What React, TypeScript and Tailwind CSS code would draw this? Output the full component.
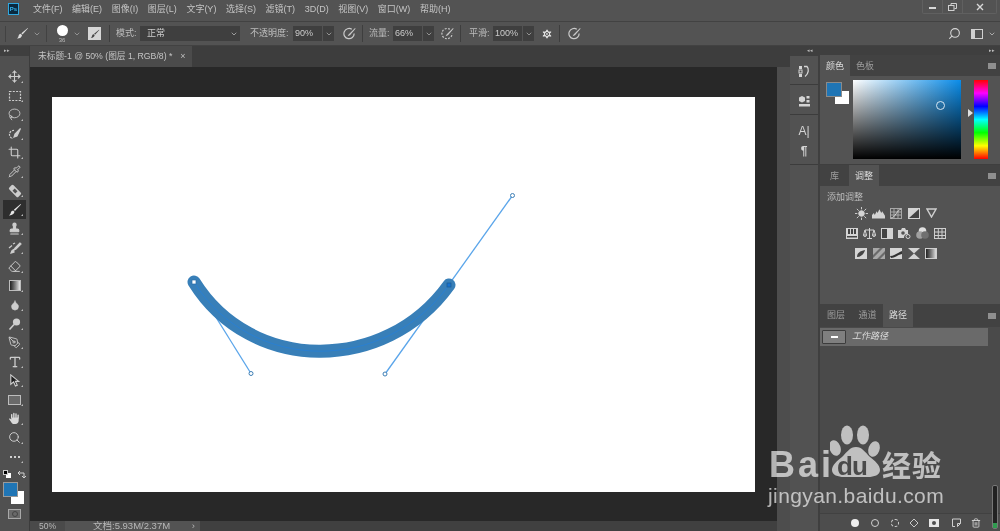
import React from "react";
import {
  ChevronDown,
  Crop,
  Droplet,
  Eraser,
  Lasso,
  Move,
  PenTool,
  Pipette,
  Search,
  Settings,
  Stamp,
  Trash2,
  Type,
} from "lucide-react";

const menus = ["文件(F)", "编辑(E)", "图像(I)", "图层(L)", "文字(Y)", "选择(S)", "滤镜(T)", "3D(D)", "视图(V)", "窗口(W)", "帮助(H)"];

const BrushIcon = ({ size = 14 }: { size?: number }) => (
  <svg width={size} height={size} viewBox="0 0 14 14" fill="currentColor">
    <path d="M12.6 1 13 1.4 7 8 5.8 6.8Z" />
    <path d="M5.2 7.4 6.5 8.8C6.2 11 4 12.6 1 12.4 2.6 11.4 2.6 10.2 3 9 3.4 8 4.2 7.5 5.2 7.4Z" />
  </svg>
);

const Svg = ({ children, size = 14 }: { children: React.ReactNode; size?: number }) => (
  <svg width={size} height={size} viewBox="0 0 14 14" fill="none" stroke="currentColor" strokeWidth="1.2">
    {children}
  </svg>
);

const tools: React.ReactNode[] = [
  <Move size={13} strokeWidth={2} />,
  <Svg><rect x="1.5" y="2.5" width="11" height="9" strokeDasharray="2 1.3" /></Svg>,
  <Lasso size={13} strokeWidth={1.6} />,
  <Svg><path d="M6 3.5A4 4 0 1 0 5 11.5" strokeDasharray="2 1" /><path d="M12.5 1.5 7 7 6 10 9 9Z" fill="currentColor" /></Svg>,
  <Crop size={13} strokeWidth={2} />,
  <Pipette size={13} strokeWidth={1.8} />,
  <Svg><g transform="rotate(45 7 7)"><rect x="0.5" y="4" width="13" height="6" rx="1.5" fill="currentColor" stroke="none" /><rect x="5" y="5.5" width="4" height="3" fill="#535353" stroke="none" /></g></Svg>,
  <BrushIcon />,
  <Stamp size={13} strokeWidth={2} fill="currentColor" />,
  <Svg><path d="M12 2 7 7 6 9 8 8 13 3Z" fill="currentColor" /><path d="M5.5 8.5C4 9 3.5 10 3 12L6 11Z" fill="currentColor" /><path d="M1 7 4 4.5M7 2 5 3" /></Svg>,
  <Eraser size={13} strokeWidth={1.8} />,
  <div className="w-[12px] h-[11px] border border-[#bdbdbd] bg-linear-to-r from-[#222222] to-[#e8e8e8]" />,
  <Droplet size={12} fill="currentColor" strokeWidth={1} />,
  <Svg><circle cx="8.5" cy="5" r="3.6" fill="currentColor" stroke="none" /><path d="M6 7.5 1.5 12.5" strokeWidth="1.6" /></Svg>,
  <PenTool size={13} strokeWidth={1.6} />,
  <Type size={14} strokeWidth={2.2} />,
  <svg width="13" height="13" viewBox="0 0 14 14" fill="#1f1f1f" stroke="#cfcfcf" strokeWidth="1.2"><path d="M3 1 3 11 6 8.5 8 13 10 12 8 8 11.5 8Z" /></svg>,
  <div className="w-[13px] h-[10px] border border-[#bdbdbd] bg-[#6a6a6a]" />,
  <svg width="13" height="13" viewBox="0 0 14 14" fill="#d8d8d8" stroke="#d8d8d8" strokeLinecap="round">
    <path d="M4 6V2.800M6.300 6V1.500M8.600 6V2M10.900 6.500V3.500" strokeWidth="1.500" />
    <path d="M3.500 6H11.500V9.500C11.500 11.500 10 13 8 13H6.500C5 13 4 12 3.200 10.500L1 7.500C1.500 6.800 2.500 7 3.500 8Z" stroke="none" />
  </svg>,
  <Search size={13} strokeWidth={1.8} />,
];

const Tool = ({ active, children, corner = true }: { active?: boolean; children: React.ReactNode; corner?: boolean }) => (
  <div className={`relative h-[19px] mx-[3px] flex items-center justify-center text-[#cdcdcd] ${active ? "bg-[#2e2e2e] text-[#e6e6e6]" : ""}`}>
    {children}
    {corner && <span className="absolute right-[3px] bottom-[3px] w-0 h-0 border-l-[2px] border-l-transparent border-b-[2px] border-b-[#bdbdbd]" />}
  </div>
);

const Toolbar = () => (
  <div className="w-[30px] h-full flex flex-col border-r border-[#3c3c3c] bg-[#505050]">
    <div className="h-[10px] bg-[#3f3f3f] text-[5px] leading-[9px] pl-[4px] text-[#bbbbbb]">▸▸</div>
    <div className="h-[11px]" />
    {tools.map((t, i) => (
      <Tool key={i} active={i === 7}>{t}</Tool>
    ))}
    <Tool>
      <span className="flex gap-[2px]">
        <i className="w-[2px] h-[2px] bg-[#d0d0d0]" />
        <i className="w-[2px] h-[2px] bg-[#d0d0d0]" />
        <i className="w-[2px] h-[2px] bg-[#d0d0d0]" />
      </span>
    </Tool>
    <div className="h-[10px] mt-[3px] flex items-center justify-between px-[3px]">
      <span className="relative w-[8px] h-[8px]">
        <i className="absolute right-0 bottom-0 w-[5px] h-[5px] bg-white" />
        <i className="absolute left-0 top-0 w-[5px] h-[5px] bg-black border-[0.5px] border-[#cccccc]" />
      </span>
      <svg width="9" height="9" viewBox="0 0 9 9" fill="none" stroke="#d0d0d0" strokeWidth="1">
        <path d="M1 3h6v5M1 3l2-2M1 3l2 2M7 8l-2-2M7 8l2-2" />
      </svg>
    </div>
    <div className="relative h-[24px] mt-[3px]">
      <div className="absolute left-[11px] top-[9px] w-[13px] h-[13px] bg-white" />
      <div className="absolute left-[3px] top-0 w-[15px] h-[15px] bg-[#1f75b5] border border-[#9a9a9a]" />
    </div>
    <div className="flex justify-center mt-[3px]">
      <div className="w-[13px] h-[10px] border border-[#a8a8a8] bg-[#6a6a6a] flex items-center justify-center">
        <i className="w-[6px] h-[6px] rounded-full border border-[#444444]" />
      </div>
    </div>
  </div>
);

const OptInput = ({ value }: { value: string }) => (
  <div className="flex h-[15px]">
    <span className="w-[29px] bg-[#3f3f3f] text-[9px] leading-[15px] pl-[2px] text-[#cccccc]">{value}</span>
    <span className="w-[11px] ml-[1px] bg-[#3f3f3f] flex items-center justify-center text-[#bcbcbc]">
      <ChevronDown size={8} />
    </span>
  </div>
);

const Divider = ({ ml }: { ml: string }) => <span className={`w-px h-[17px] bg-[#3e3e3e] ${ml}`} />;

const Airbrush = ({ ml, cross }: { ml: string; cross?: boolean }) => (
  <svg className={ml} width="13" height="13" viewBox="0 0 14 14" fill="none" stroke="#c9c9c9" strokeWidth="1.3">
    <path d="M9.5 2.5A5.5 5.5 0 1 0 12 7" strokeDasharray={cross ? "2 1.5" : undefined} />
    <path d="M13 1 6 8 5 10 7.5 9 13.5 2Z" fill="#c9c9c9" stroke="none" />
  </svg>
);

const OptionsBar = () => (
  <div className="h-[25px] border-y border-[#424242] bg-[#535353] flex items-center text-[9px] text-[#bdbdbd] shrink-0">
    <span className="ml-[5px] w-px h-[16px] bg-[#424242]" />
    <span className="ml-[10px] text-[#dddddd]"><BrushIcon size={13} /></span>
    <ChevronDown size={8} className="ml-[4px] text-[#b0b0b0]" />
    <span className="w-px h-[17px] bg-[#424242] ml-[5px]" />
    <div className="ml-[8px] w-[14px] flex flex-col items-center">
      <span className="w-[11px] h-[11px] mt-[1px] rounded-full bg-white" />
      <span className="text-[6px] leading-[7px] mt-[1px] text-[#bbbbbb]">36</span>
    </div>
    <ChevronDown size={8} className="ml-[4px] text-[#b0b0b0]" />
    <div className="ml-[7px] w-[13px] h-[13px] bg-[#d6d6d6] flex items-center justify-center text-[#444444]"><BrushIcon size={10} /></div>
    <Divider ml="ml-[8px]" />
    <span className="ml-[6px] w-[24px] whitespace-nowrap">模式:</span>
    <div className="w-[100px] h-[15px] bg-[#3f3f3f] flex items-center justify-between pl-[7px] pr-[2px] text-[#cccccc]">
      <span>正常</span>
      <ChevronDown size={8} />
    </div>
    <span className="ml-[10px] w-[43px] whitespace-nowrap">不透明度:</span>
    <OptInput value="90%" />
    <Airbrush ml="ml-[9px]" />
    <Divider ml="ml-[6px]" />
    <span className="ml-[6px] w-[24px] whitespace-nowrap">流量:</span>
    <OptInput value="66%" />
    <Airbrush ml="ml-[7px]" cross />
    <Divider ml="ml-[6px]" />
    <span className="ml-[8px] w-[24px] whitespace-nowrap">平滑:</span>
    <OptInput value="100%" />
    <Settings size={12} fill="#e0e0e0" strokeWidth={2} className="ml-[7px] text-[#535353]" />
    <Divider ml="ml-[6px]" />
    <Airbrush ml="ml-[8px]" />
    <div className="ml-auto flex items-center text-[#d6d6d6]">
      <Search size={13} strokeWidth={2} className="-scale-x-100" />
      <div className="ml-[10px] w-[12px] h-[10px] border border-[#d0d0d0] flex">
        <i className="w-[3px] bg-[#d0d0d0]" />
      </div>
      <ChevronDown size={8} className="ml-[5px] mr-[4px]" />
    </div>
  </div>
);

const TitleBar = () => (
  <div className="h-[21px] flex items-start shrink-0 bg-[#535353]">
    <div className="ml-[8px] mt-[3px] w-[11px] h-[12px] bg-[#0a2a3f] border border-[#2fa8e0] text-[6px] leading-[10px] text-center font-bold text-[#38b6f0]">Ps</div>
    <div className="ml-[14px] mt-[3px] flex gap-[9.6px] text-[9px] leading-[13px] text-[#c4c4c4] whitespace-nowrap">
      {menus.map((m) => (
        <span key={m}>{m}</span>
      ))}
    </div>
    <div className="ml-auto mr-[3px] w-[75px] h-[14px] border border-t-0 border-[#606060] rounded-b-[2px] flex items-center text-[#d0d0d0]">
      <div className="w-[20px] h-full border-r border-[#606060] flex items-center justify-center pt-[3px]"><i className="w-[7px] h-[1.5px] bg-[#d8d8d8]" /></div>
      <div className="w-[20px] h-full border-r border-[#606060] flex items-center justify-center">
        <svg width="9" height="8" viewBox="0 0 9 8" fill="none" stroke="#d0d0d0"><rect x="0.5" y="2.5" width="5.5" height="5" /><path d="M3 2V.5h5.5v5H6.5" /></svg>
      </div>
      <div className="flex-1 flex items-center justify-center">
        <svg width="8" height="8" viewBox="0 0 8 8" stroke="#d8d8d8" strokeWidth="1.4"><path d="M1 1 7 7M7 1 1 7" /></svg>
      </div>
    </div>
  </div>
);

const Handle = ({ x, y }: { x: number; y: number }) => (
  <circle cx={x} cy={y} r="2" fill="#ffffff" stroke="#3f7fb5" strokeWidth="1" />
);

const curve = "M194 282C251 373.5 385 374 449 285";

const Artboard = () => (
  <div className="w-[703px] h-[395px] bg-white">
    <svg width="703" height="395" viewBox="52 97 703 395" fill="none">
      <path d="M194 282 251 373.5" stroke="#5aa5ea" strokeWidth="1.3" />
      <path d="M385 374 512.5 195.5" stroke="#5aa5ea" strokeWidth="1.3" />
      <path d={curve} stroke="#387fb8" strokeWidth="13" strokeLinecap="round" />
      <path d={curve} stroke="#2a80d2" strokeWidth="1" />
      <rect x="192" y="280" width="4" height="4" fill="#ffffff" stroke="#2a6ea8" strokeWidth="0.7" />
      <rect x="447" y="283" width="4" height="4" fill="#1672d0" stroke="#1c5a90" strokeWidth="0.7" />
      <Handle x={251} y={373.5} />
      <Handle x={385} y={374} />
      <Handle x={512.5} y={195.5} />
    </svg>
  </div>
);

const Document = () => (
  <div className="w-[747px] h-full flex flex-col">
    <div className="h-[21px] bg-[#3d3d3d] flex shrink-0">
      <div className="w-[162px] bg-[#4b4b4b] flex items-center pl-[8px] text-[8.7px] text-[#c4c4c4] whitespace-nowrap">
        <span>未标题-1 @ 50% (图层 1, RGB/8) *</span>
        <span className="ml-[8px] text-[#bdbdbd] text-[9px] leading-none">×</span>
      </div>
    </div>
    <div className="flex-1 bg-[#282828] pl-[22px] pt-[30px] shrink-0 min-h-0">
      <Artboard />
    </div>
    <div className="h-[10px] bg-[#404040] flex text-[9.5px] leading-[10px] text-[#b8b8b8] shrink-0">
      <span className="w-[35px] bg-[#4a4a4a] pl-[9px] text-[8.5px]">50%</span>
      <span className="w-[135px] bg-[#535353] pl-[28px] flex justify-between pr-[5px]">
        <span>文档:5.93M/2.37M</span>
        <span>›</span>
      </span>
    </div>
  </div>
);

const Gutter = () => (
  <div className="w-[13px] h-full flex flex-col bg-[#4d4d4d] shrink-0">
    <div className="h-[21px] bg-[#3d3d3d]" />
  </div>
);

const Dock = () => (
  <div className="w-[30px] h-full border-r-2 border-[#3f3f3f] bg-[#525252] flex flex-col text-[#d4d4d4] shrink-0">
    <div className="h-[10px] bg-[#3f3f3f] shrink-0 text-[5px] leading-[9px] text-right pr-[5px] text-[#bbbbbb]">◂◂</div>
    <div className="h-[29px] border-b border-[#3c3c3c] flex items-center justify-center pt-[3px]">
      <svg width="12" height="13" viewBox="0 0 12 13" fill="none" stroke="#d4d4d4">
        <rect x="1" y="1" width="3" height="3" fill="#d4d4d4" stroke="none" />
        <rect x="1" y="5" width="3" height="3" />
        <rect x="1" y="9" width="3" height="3" fill="#d4d4d4" stroke="none" />
        <path d="M6 1.5h3c2 2 2 7-2 10" strokeWidth="1.3" />
      </svg>
    </div>
    <div className="h-[30px] border-b border-[#3c3c3c] flex items-center justify-center pt-[3px]">
      <svg width="13" height="12" viewBox="0 0 13 12" fill="#d4d4d4">
        <path d="M4 1 7 2.5V6L4 7.5 1 6V2.5Z" />
        <rect x="8.5" y="1" width="3" height="2.5" />
        <rect x="8.5" y="5" width="3" height="2.5" />
        <rect x="1" y="9" width="11" height="2.5" />
      </svg>
    </div>
    <div className="h-[50px] border-b border-[#3c3c3c] flex flex-col items-center justify-end pb-[3px]">
      <span className="text-[12px] leading-[20px]">A|</span>
      <span className="text-[12px] leading-[20px] font-bold">¶</span>
    </div>
    <div className="flex-1" />
  </div>
);

const Tab = ({ label, active, w }: { label: string; active?: boolean; w: string }) => (
  <div className={`${w} text-center text-[9px] leading-[21px] pt-px ${active ? "bg-[#535353] text-[#dddddd]" : "text-[#9d9d9d]"}`}>{label}</div>
);

const PanelTabs = ({ children }: { children: React.ReactNode }) => (
  <div className="h-[21px] bg-[#424242] flex items-stretch shrink-0">
    {children}
    <div className="ml-auto mr-[4px] self-center w-[8px] h-[6px] bg-[#8f8f8f]" />
  </div>
);

const ColorPanel = () => (
  <div className="h-[88px] relative bg-[#535353] shrink-0">
    <div className="absolute left-[15px] top-[15px] w-[14px] h-[13px] bg-white" />
    <div className="absolute left-[6px] top-[6px] w-[16px] h-[15px] bg-[#1f75b5] border border-[#8a8a8a]" />
    <div className="absolute left-[33px] top-[4px] w-[108px] h-[79px] bg-[linear-gradient(to_bottom,transparent,#000000),linear-gradient(to_right,#ffffff,#0a8ce8)]">
      <div className="absolute left-[83px] top-[21px] w-[9px] h-[9px] rounded-full border border-[#d6e6f2]" />
    </div>
    <div className="absolute left-[148px] top-[33px] w-0 h-0 border-y-[4px] border-y-transparent border-l-[5px] border-l-[#e0e0e0]" />
    <div className="absolute left-[154px] top-[4px] w-[14px] h-[79px] bg-[linear-gradient(to_bottom,#ff0000,#ff00ff,#0000ff,#00ffff,#00ff00,#ffff00,#ff0000)]" />
  </div>
);

const adj: React.ReactNode[][] = [
  [
    <svg width="13" height="13" viewBox="0 0 14 14" stroke="#d4d4d4"><circle cx="7" cy="7" r="3" fill="#d4d4d4" /><path d="M7 0v2.5M7 11.5V14M0 7h2.5M11.5 7H14M2 2l2 2M10 10l2 2M12 2l-2 2M4 10l-2 2" /></svg>,
    <svg width="14" height="11" viewBox="0 0 14 11" fill="#d4d4d4"><path d="M0 11V7l2-2 1 2 2-4 1 2 2-4 2 4 1-2 3 5v3Z" /></svg>,
    <svg width="12" height="11" viewBox="0 0 12 11" fill="none" stroke="#a8a8a8"><rect x=".5" y=".5" width="11" height="10" /><path d="M4 0v11M8 0v11M0 4h12M0 7h12" /><path d="M1 10C5 10 7 2 11 1" stroke="#d4d4d4" /></svg>,
    <svg width="12" height="11" viewBox="0 0 12 11"><rect width="12" height="11" fill="#d4d4d4" /><path d="M1 10 11 1V10Z" fill="#444444" /></svg>,
    <svg width="11" height="10" viewBox="0 0 11 10" fill="none" stroke="#cfcfcf" strokeWidth="1.4"><path d="M1 1h9L5.500 9Z" /></svg>,
  ],
  [
    <svg width="12" height="11" viewBox="0 0 12 11"><rect width="12" height="11" fill="#d4d4d4" /><path d="M2 1h2v5H2ZM5 1h2v5H5ZM8 1h2v5H8Z" fill="#444444" /><rect x="1" y="8" width="10" height="1.500" fill="#444444" /></svg>,
    <svg width="13" height="11" viewBox="0 0 13 11" fill="none" stroke="#d4d4d4"><path d="M6.500 0v10M2 2h9M2 2 .5 7h3ZM11 2 9.500 7h3Z" /><path d="M.5 7a1.500 1.500 0 0 0 3 0M9.500 7a1.500 1.500 0 0 0 3 0M4 10.500h5" /></svg>,
    <svg width="12" height="11" viewBox="0 0 12 11"><rect width="12" height="11" fill="#d4d4d4" /><rect x="1" y="1" width="5" height="9" fill="#444444" /></svg>,
    <svg width="13" height="11" viewBox="0 0 13 11" fill="#d4d4d4"><path d="M0 2h3l1-2h3l1 2h2v4a3.500 3.500 0 0 0-4 4H0Z" /><circle cx="5" cy="5" r="1.800" fill="#535353" /><circle cx="10" cy="8.500" r="2" fill="none" stroke="#d4d4d4" /></svg>,
    <svg width="13" height="12" viewBox="0 0 13 12"><circle cx="6.500" cy="4" r="3.800" fill="#e0e0e0" /><circle cx="4" cy="8" r="3.800" fill="#a0a0a0" /><circle cx="9" cy="8" r="3.800" fill="#707070" /></svg>,
    <svg width="12" height="11" viewBox="0 0 12 11" fill="none" stroke="#cfcfcf"><rect x=".5" y=".5" width="11" height="10" /><path d="M4.300 0v11M8 0v11M0 4h12M0 7.500h12" /></svg>,
  ],
  [
    <svg width="12" height="11" viewBox="0 0 12 11"><rect width="12" height="11" fill="#d4d4d4" /><path d="M2 9C2 5 5 3 10 2 9 6 6 9 2 9Z" fill="#444444" /></svg>,
    <svg width="12" height="11" viewBox="0 0 12 11"><rect width="12" height="11" fill="#a8a8a8" /><path d="M0 7 7 0H10L0 10ZM4 11 12 3V6L7 11Z" fill="#6a6a6a" /></svg>,
    <svg width="12" height="11" viewBox="0 0 12 11"><rect width="12" height="11" fill="#d4d4d4" /><path d="M0 8C4 8 7 5 12 3V6C7 7 5 10 1 10Z" fill="#333333" /></svg>,
    <svg width="12" height="11" viewBox="0 0 12 11"><rect width="12" height="11" fill="#d4d4d4" /><path d="M0 0 6 5.500 0 11ZM12 0 6 5.500 12 11Z" fill="#555555" /></svg>,
    <div className="w-[12px] h-[11px] border border-[#cfcfcf] bg-linear-to-r from-[#222222] to-[#dddddd]" />,
  ],
];

const AdjustPanel = () => (
  <div className="h-[118px] bg-[#535353] shrink-0">
    <div className="text-[9px] leading-[13px] pt-[5px] pl-[7px] text-[#bcbcbc]">添加调整</div>
    <div className="flex flex-col items-center gap-[6px] mt-[2px] pr-[28px]">
      {adj.map((row, i) => (
        <div key={i} className="flex items-center h-[14px] gap-[4.500px]">
          {row.map((ic, j) => (
            <span key={j} className="w-[13px] flex items-center justify-center">{ic}</span>
          ))}
        </div>
      ))}
    </div>
  </div>
);

const PathsPanel = () => (
  <div className="flex-1 flex flex-col bg-[#4a4a4a] min-h-0">
    <div className="h-[18px] mt-px w-[168px] bg-[#6a6a6a] flex items-center shrink-0">
      <div className="ml-[2px] w-[24px] h-[14px] bg-[#7f7f7f] border border-[#3c3c3c] rounded-[1px] flex items-center justify-center">
        <i className="w-[7px] h-[2px] bg-white" />
      </div>
      <span className="ml-[6px] text-[9px] italic text-[#dcdcdc]">工作路径</span>
    </div>
    <div className="flex-1" />
    <div className="relative h-[18px] border-t border-[#414141] flex items-center bg-[#4d4d4d] shrink-0">
      <div className="flex items-center ml-[31px] text-[#d8d8d8]">
        <i className="w-[8px] h-[8px] rounded-full bg-[#eeeeee]" />
        <i className="ml-[12px] w-[8px] h-[8px] rounded-full border border-[#cfcfcf]" />
        <i className="ml-[12px] w-[8px] h-[8px] rounded-full border border-dashed border-[#cfcfcf]" />
        <svg className="ml-[10px]" width="10" height="10" viewBox="0 0 10 10" fill="none" stroke="#c8c8c8"><path d="M5 1 9 5 5 9 1 5Z" /></svg>
        <div className="ml-[10px] w-[10px] h-[8px] bg-[#e6e6e6] flex items-center justify-center"><i className="w-[4px] h-[4px] rounded-full bg-[#4d4d4d]" /></div>
        <svg className="ml-[13px]" width="9" height="9" viewBox="0 0 9 9" fill="none" stroke="#d0d0d0"><path d="M3 8.500H.5V1H8.500V5.500L5.500 8.500V5.500H8.500" /></svg>
        <Trash2 size={10} className="ml-[10px]" />
      </div>
      <div className="absolute left-[172px] bottom-[2px] w-[6px] h-[44px] bg-[#222222] border border-[#777777] rounded-[2px] flex items-end">
        <i className="w-full h-[5px] bg-[#2f9a4f]" />
      </div>
    </div>
  </div>
);

const Panels = () => (
  <div className="w-[180px] h-full flex flex-col shrink-0 bg-[#3f3f3f]">
    <div className="h-[9px] bg-[#3f3f3f] text-[5px] leading-[9px] text-right text-[#bbbbbb] pr-[5px] shrink-0">▸▸</div>
    <PanelTabs>
      <Tab label="颜色" active w="w-[30px]" />
      <Tab label="色板" w="w-[30px]" />
    </PanelTabs>
    <ColorPanel />
    <div className="h-[1px] shrink-0" />
    <PanelTabs>
      <Tab label="库" w="w-[29px]" />
      <Tab label="调整" active w="w-[30px]" />
    </PanelTabs>
    <AdjustPanel />
    <div className="h-[23px] bg-[#424242] flex items-stretch shrink-0">
      <Tab label="图层" w="w-[32px]" />
      <Tab label="通道" w="w-[31px]" />
      <Tab label="路径" active w="w-[30px]" />
      <div className="ml-auto mr-[4px] self-center w-[8px] h-[6px] bg-[#8f8f8f]" />
    </div>
    <PathsPanel />
  </div>
);

// watermark sits over the dock and panels
const Watermark = () => (
  <div className="absolute left-[768px] top-[423px] w-[190px] h-[88px] text-white/65 pointer-events-none">
    <span className="absolute left-[1px] top-[20px] text-[36px] leading-[44px] font-bold tracking-[3px] font-['Liberation_Sans',sans-serif]">Bai</span>
    <svg className="absolute left-[62px] top-[2px]" width="52" height="56" viewBox="0 0 52 56" fill="currentColor">
      <ellipse cx="5" cy="23" rx="5.500" ry="8" transform="rotate(-20 5 23)" />
      <ellipse cx="17" cy="10" rx="6" ry="9.500" />
      <ellipse cx="33" cy="10" rx="6" ry="9.500" />
      <ellipse cx="44" cy="24" rx="5.500" ry="8" transform="rotate(20 44 24)" />
      <path d="M26 22C32 22 35 27 40 32 45 36 50 40 50 45 50 50 44 52 38 52L14 52C8 52 2 50 2 45 2 40 7 36 12 32 17 27 20 22 26 22Z" />
    </svg>
    <span className="absolute left-[69px] top-[30px] text-[26px] leading-[26px] font-bold tracking-[-1px] text-[#4a4a4a] font-['Liberation_Sans',sans-serif]">du</span>
    <span className="absolute left-[114px] top-[26px] text-[29px] leading-[36px] font-bold whitespace-nowrap tracking-[1px]">经验</span>
    <span className="absolute left-0 top-[60px] text-[21px] leading-[26px] whitespace-nowrap font-['Liberation_Sans',sans-serif] tracking-[0.4px]">jingyan.baidu.com</span>
  </div>
);

export default function App() {
  return (
    <div className="relative w-[1000px] h-[531px] overflow-hidden bg-[#535353] flex flex-col blur-[0.35px] font-['Liberation_Sans','Noto_Sans_CJK_SC',sans-serif]">
      <TitleBar />
      <OptionsBar />
      <div className="flex flex-1 min-h-0">
        <Toolbar />
        <Document />
        <Gutter />
        <Dock />
        <Panels />
      </div>
      <Watermark />
    </div>
  );
}
